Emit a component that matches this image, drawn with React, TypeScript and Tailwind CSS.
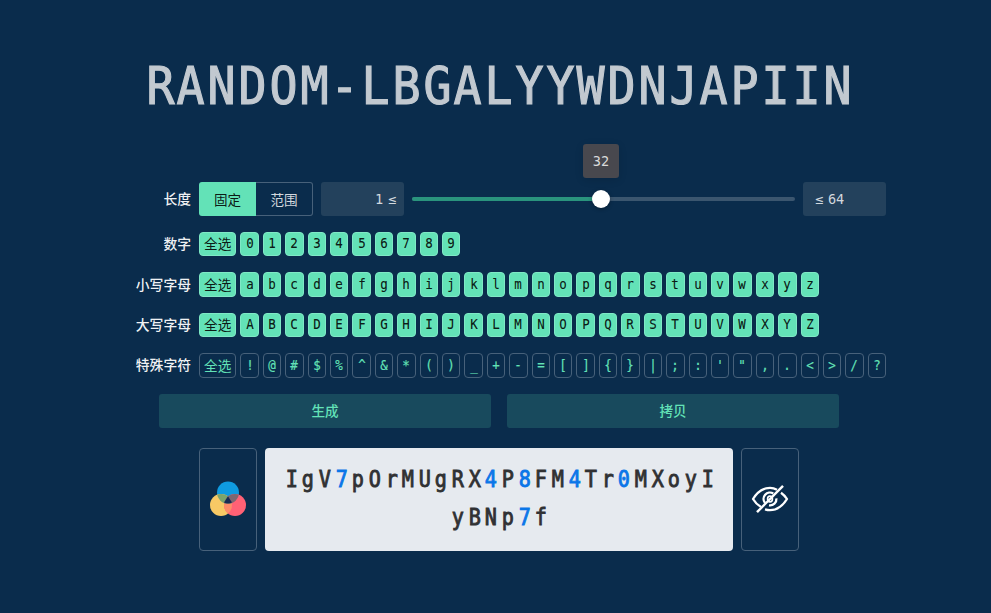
import type { ReactNode } from "react";

const mono = "font-['DejaVu_Sans_Mono','Noto_Sans_CJK_SC',monospace]";
const cjk = "font-['Noto_Sans_CJK_SC',sans-serif]";

function Label({ children }: { children: ReactNode }) {
  return (
    <div
      className={`${cjk} w-[79px] shrink-0 pb-[2px] text-right text-[13.8px] leading-5 font-medium text-white/95`}
    >
      {children}
    </div>
  );
}

function CharRow({ label, chars, selected }: { label: string; chars: string; selected: boolean }) {
  const tone = selected
    ? "border-[#7fe9c6] bg-[#63e2b7] text-black/90"
    : "border-[#47617a] text-[#63e2b7]";
  return (
    <div className="flex h-[24.4px] items-center gap-2">
      <Label>{label}</Label>
      <div className="flex h-full gap-1">
        <button
          className={`${cjk} ${tone} flex w-[37.4px] items-center justify-center whitespace-nowrap rounded-[4px] border text-[13.6px] leading-none`}
        >
          全选
        </button>
        {chars.split("").map((c) => (
          <button
            key={c}
            className={`${mono} ${tone} flex w-[18.42px] items-center justify-center rounded-[4px] border text-[13.6px] leading-none [-webkit-text-stroke:0.15px_currentColor]`}
          >
            <span className="inline-block scale-x-[0.92]">{c}</span>
          </button>
        ))}
      </div>
    </div>
  );
}

function Glyphs({ text }: { text: string }) {
  return text.split("").map((c, i) => (
    <span key={i} className="inline-block scale-x-[0.91]">
      {c}
    </span>
  ));
}

function Secret({ text }: { text: string }) {
  return (
    <div>
      {text.split("").map((c, i) => (
        <span
          key={i}
          className={`inline-block origin-[45%_50%] scale-x-[0.9] ${/\d/.test(c) ? "text-[#0b76e8]" : ""}`}
        >
          {c}
        </span>
      ))}
    </div>
  );
}

export default function App() {
  return (
    <div className="h-[613px] w-full overflow-hidden bg-[#0a2c4c]">
      <main className="ml-28 w-[775px]">
        <h1
          className={`${mono} h-[182px] whitespace-nowrap pt-[51px] pr-[2px] text-center text-[51.2px] leading-[70px] tracking-[-0.06px] text-[#c2c9d0] [-webkit-text-stroke:1.2px_#c2c9d0]`}
        >
          <Glyphs text="RANDOM-LBGALYYWDNJAPIIN" />
        </h1>

        <div className="flex flex-col gap-4">
          <div className="flex h-[34px] items-center gap-2">
            <Label>长度</Label>
            <div className={`${cjk} flex h-full w-[114px] text-[13.6px]`}>
              <button className="w-[57px] rounded-l-[3px] bg-[#63e2b7] text-black/90">固定</button>
              <button className="w-[57px] rounded-r-[3px] border border-l-0 border-[#47617a] text-[#d2d8de]">
                范围
              </button>
            </div>
            <div
              className={`${mono} flex h-full w-[83px] items-center justify-end rounded-[3px] bg-[#23415c] pr-2 text-[13.6px] tracking-[-0.2px] [word-spacing:-3px] text-[#d2d8de]`}
            >
              1 ≤
            </div>
            <div className="relative h-1 w-[383px] rounded-full bg-[#3b566f]">
              <div className="h-1 w-[189px] rounded-full bg-[#2a947d]" />
              <div className="absolute -top-[7px] left-[180px] size-[18px] rounded-full bg-white shadow-[0_1px_4px_rgba(0,0,0,0.3)]" />
              <div
                className={`${mono} absolute -top-[53px] left-[171px] flex h-[34px] w-9 items-center justify-center rounded-[3px] bg-[#48484e] text-[13.6px] text-[#dadadb] shadow-[0_2px_8px_rgba(0,0,0,0.12)]`}
              >
                32
              </div>
            </div>
            <div
              className={`${mono} flex h-full w-[83px] items-center rounded-[3px] bg-[#23415c] pl-3 text-[13.6px] tracking-[-0.2px] [word-spacing:-3px] text-[#d2d8de]`}
            >
              ≤ 64
            </div>
          </div>
          <CharRow label="数字" chars="0123456789" selected />
          <CharRow label="小写字母" chars="abcdefghijklmnopqrstuvwxyz" selected />
          <CharRow label="大写字母" chars="ABCDEFGHIJKLMNOPQRSTUVWXYZ" selected />
          <CharRow label="特殊字符" chars={"!@#$%^&*()_+-=[]{}|;:'\",.<>/?"} selected={false} />

          <div
            className={`${cjk} ml-[47px] flex h-[34px] w-[680px] gap-4 text-[13.6px] font-medium text-[#63e2b7]`}
          >
            <button className="flex-1 rounded-[3px] bg-[#184a5d]">生成</button>
            <button className="flex-1 rounded-[3px] bg-[#184a5d]">拷贝</button>
          </div>
        </div>

        <div className="ml-[87px] mt-5 flex h-[103px] w-[600px] gap-2">
          <button className="flex w-[58px] items-center justify-center rounded-[4px] border border-[#47617a]">
            <svg width="36" height="36" viewBox="0 0 36 36">
              <defs>
                <clipPath id="top"><circle cx="18" cy="11.6" r="11" /></clipPath>
                <clipPath id="left"><circle cx="11" cy="24" r="11" /></clipPath>
              </defs>
              <circle cx="18" cy="11.6" r="11" fill="#0f9be0" />
              <circle cx="11" cy="24" r="11" fill="#f7c965" />
              <circle cx="25" cy="24" r="11" fill="#ff6175" />
              <g clipPath="url(#left)"><circle cx="25" cy="24" r="11" fill="#fc8b68" /></g>
              <g clipPath="url(#top)">
                <circle cx="11" cy="24" r="11" fill="#7ba36c" />
                <circle cx="25" cy="24" r="11" fill="#7d6670" />
              </g>
              <path d="M18 15.2 L22 21.6 Q18 23.4 14 21.6Z" fill="#172c55" />
            </svg>
          </button>
          <div
            className={`${mono} flex w-[468px] flex-col items-center justify-center rounded-[4px] bg-[#e6eaef] pb-[2px] pl-[4px] text-[22.4px] leading-[38px] tracking-[3.16px] text-[#303133] [-webkit-text-stroke:0.9px_currentColor]`}
          >
            <Secret text="IgV7pOrMUgRX4P8FM4Tr0MXoyI" />
            <Secret text="yBNp7f" />
          </div>
          <button className="flex w-[58px] items-center justify-center rounded-[4px] border border-[#47617a]">
            <svg
              width="38"
              height="32"
              viewBox="0 0 38 32"
              fill="none"
              stroke="white"
              strokeWidth="2.3"
              strokeLinejoin="round"
            >
              <path d="M26 6.7C23.8 5.5 21.5 4.9 19 4.9C12 4.9 6 9.5 2 16C4.1 19.5 6.8 22.3 10 24.1" />
              <path d="M30 9.7C32.4 11.4 34.4 13.5 36 16C32 22.5 26 27.1 19 27.1C17.2 27.1 15.6 26.8 14 26.3" />
              <path d="M22.3 10.5A6.4 6.4 0 0 0 14 20" />
              <path d="M25.4 15.3A6.4 6.4 0 0 1 18 22.3" />
              <ellipse cx="19" cy="16" rx="2.4" ry="2.8" strokeWidth="1.7" />
              <path d="M6 29.2L32 2.8" strokeWidth="2.4" />
            </svg>
          </button>
        </div>
      </main>
    </div>
  );
}
